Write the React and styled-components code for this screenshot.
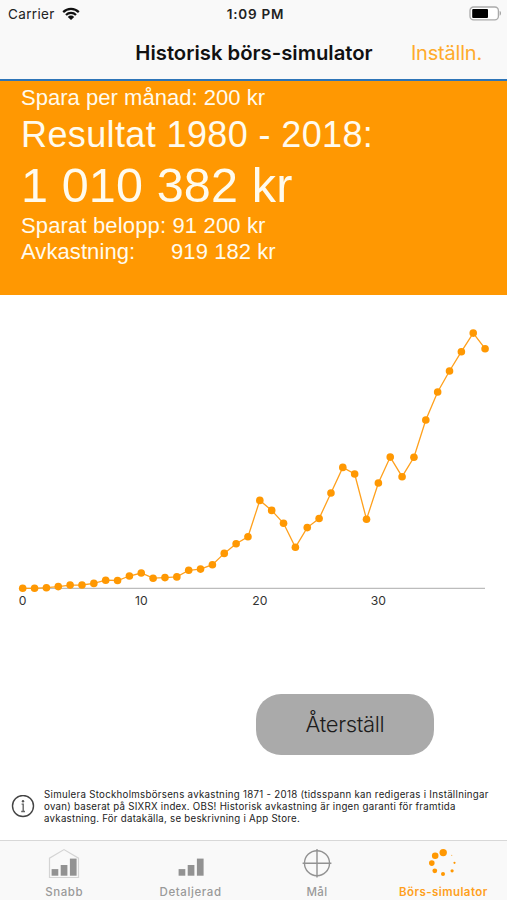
import styled, { createGlobalStyle } from "styled-components";

const ORANGE = "#ff9802";

// height of each yearly point above the axis
const series = [
  0, 0, 0.6, 1.7, 3.2, 3.3, 4.9, 8.1, 7.8, 12.3, 15.3, 10.1, 10.7, 11.4, 18, 19.2, 23.6, 34.9, 44.6, 51.6, 87.9, 77.9,
  65, 41, 60.7, 69.8, 95.3, 120.9, 114.3, 69, 105.3, 131.2, 111.6, 131, 168.3, 196.3, 217.3, 236.6, 255.2, 239.6,
];

const AXIS_Y = 293.3;
const START_X = 22.7;
const STEP = 11.856;

const points = series.map((value, year) => ({ x: START_X + year * STEP, y: AXIS_Y - value }));

const Wifi = () => (
  <svg width='18' height='14' viewBox='0 0 18 14'>
    <g fill='none' stroke='#111' strokeWidth='2.2'>
      <path d='M1.2 5.1a11 11 0 0 1 15.6 0' />
      <path d='M4 8a7 7 0 0 1 10 0' />
    </g>
    <path d='M9 13 5.8 9.9a4.5 4.5 0 0 1 6.4 0z' fill='#111' />
  </svg>
);

const Battery = () => (
  <svg width='34' height='16' viewBox='0 0 34 16'>
    <rect x='2' y='1' width='28.4' height='12.8' rx='3.6' fill='#fff' stroke='#aaa' strokeWidth='1.3' />
    <rect x='4.2' y='2.9' width='15.8' height='9' rx='1' fill='#000' />
    <path d='M31.7 5.1c1.6.5 1.6 4.1 0 4.6z' fill='#999' />
  </svg>
);

const Bars = ({ house }) => (
  <svg width='32' height='32' viewBox='0 0 32 32'>
    {house && <path d='M1.5 29.5V10.2L16 1.6l14.5 8.6v19.3z' fill='none' stroke='#d4d4d4' strokeWidth='1.2' />}
    <g fill='#929292'>
      <rect x='3.6' y='21.1' width='6.7' height='6.6' />
      <rect x='12.7' y='17' width='6.7' height='10.7' />
      <rect x='21.9' y='10.6' width='6.7' height='17.1' />
    </g>
  </svg>
);

const Target = () => (
  <svg width='32' height='32' viewBox='0 0 32 32'>
    <g fill='none' stroke='#929292' strokeWidth='1.4'>
      <circle cx='16' cy='15.2' r='12.5' />
      <path d='M16 1v28.4M1.6 15.2h28.8' />
    </g>
  </svg>
);

const Spinner = () => (
  <svg width='32' height='32' viewBox='0 0 32 32'>
    <g fill={ORANGE}>
      <circle cx='16.2' cy='4.6' r='3.7' />
      <circle cx='8.2' cy='7.8' r='3.3' />
      <circle cx='4.8' cy='15.1' r='2.8' />
      <circle cx='7.8' cy='22.8' r='2.4' />
      <circle cx='16' cy='26' r='2' />
      <circle cx='25.1' cy='22.8' r='1.6' />
      <circle cx='27.5' cy='14.8' r='1.1' />
      <circle cx='24.7' cy='7.4' r='0.6' opacity='0.6' />
    </g>
  </svg>
);

const Info = () => (
  <svg width='24' height='24' viewBox='0 0 24 24'>
    <circle cx='12' cy='11' r='10.5' fill='none' stroke='#444' strokeWidth='1.4' />
    <circle cx='12' cy='6.2' r='1.2' fill='#555' />
    <path d='M10.6 9.1h1.6v7.4M10.2 16.5h3.8' fill='none' stroke='#666' strokeWidth='1.4' />
  </svg>
);

const Chart = () => (
  <ChartSvg viewBox='0 0 507 325'>
    <line x1={START_X} x2='485' y1={AXIS_Y} y2={AXIS_Y} stroke='#bcbcbc' strokeWidth='1.2' />
    <polyline
      points={points.map((p) => `${p.x},${p.y}`).join(" ")}
      fill='none'
      stroke='#ffa01c'
      strokeWidth='1.3'
    />
    {points.map((p, year) => (
      <circle key={year} cx={p.x} cy={p.y} r='3.8' fill={ORANGE} />
    ))}
    {[0, 10, 20, 30].map((year) => (
      <AxisLabel key={year} x={START_X + year * STEP} y='310'>
        {year}
      </AxisLabel>
    ))}
  </ChartSvg>
);

const tabs = [
  { name: "Snabb", icon: <Bars house />, spacing: 0.55 },
  { name: "Detaljerad", icon: <Bars />, spacing: 0.6 },
  { name: "Mål", icon: <Target />, spacing: 0.3 },
  { name: "Börs-simulator", icon: <Spinner />, spacing: 0.43, active: true },
];

const App = () => {
  return (
    <>
      <GlobalStyle />
      <Screen>
        <StatusBar>
          <Carrier>
            <span>Carrier</span>
            <Wifi />
          </Carrier>
          <Clock>1:09 PM</Clock>
          <BatterySlot>
            <Battery />
          </BatterySlot>
        </StatusBar>

        <NavBar>
          <NavTitle>Historisk börs-simulator</NavTitle>
          <NavAction>Inställn.</NavAction>
        </NavBar>

        <Summary>
          <Line $size={22} $height={31} $spacing={0.03}>Spara per månad: 200 kr</Line>
          <Line $size={36} $height={44} $spacing={0.38}>Resultat 1980 - 2018:</Line>
          <Line $size={48.5} $height={56} $spacing={0.15}>1 010 382 kr</Line>
          <Line $size={22} $height={26} $spacing={0.15}>Sparat belopp: 91 200 kr</Line>
          <Line $size={22} $height={26} $spacing={0.08}>
            <Label>Avkastning:</Label>
            <span>919 182 kr</span>
          </Line>
        </Summary>

        <Chart />

        <Actions>
          <ResetButton>Återställ</ResetButton>
        </Actions>

        <Note>
          <Info />
          <NoteText>
            <NoteLine $spacing={0.29}>Simulera Stockholmsbörsens avkastning 1871 - 2018 (tidsspann kan redigeras i Inställningar</NoteLine>
            <NoteLine $spacing={0.26}>ovan) baserat på SIXRX index. OBS! Historisk avkastning är ingen garanti för framtida</NoteLine>
            <NoteLine $spacing={0.26}>avkastning. För datakälla, se beskrivning i App Store.</NoteLine>
          </NoteText>
        </Note>

        <TabBar>
          {tabs.map((tab) => (
            <Tab key={tab.name} $active={tab.active} $spacing={tab.spacing}>
              {tab.icon}
              <span>{tab.name}</span>
            </Tab>
          ))}
        </TabBar>
      </Screen>
    </>
  );
};

export default App;

const GlobalStyle = createGlobalStyle`
  * {
    box-sizing: border-box;
  }

  body {
    margin: 0;
    background: #fff;
    font-family: Inter, Roboto, sans-serif;
  }

  svg {
    display: block;
    flex-shrink: 0;
  }
`;

const Screen = styled.div`
  display: flex;
  flex-direction: column;
  width: 507px;
  height: 900px;
  overflow: hidden;
`;

const StatusBar = styled.div`
  display: grid;
  grid-template-columns: 1fr auto 1fr;
  align-items: center;
  height: 27px;
  padding: 0 5px 0 8px;
  background: #f9f9f9;
  font-size: 13.5px;
  color: #222;
`;

const Carrier = styled.div`
  display: flex;
  align-items: center;
  gap: 7px;
  letter-spacing: 0.35px;
`;

const Clock = styled.div`
  padding-left: 1px;
  font-weight: 600;
  letter-spacing: 0.75px;
`;

const BatterySlot = styled.div`
  display: flex;
  justify-content: flex-end;
`;

const NavBar = styled.div`
  display: grid;
  grid-template-columns: 1fr auto 1fr;
  align-items: center;
  height: 54px;
  padding: 0 25px 1px 26px;
  background: #f9f9f9;
  border-bottom: 2px solid #2e75b8;
`;

const NavTitle = styled.h1`
  grid-column: 2;
  margin: 0;
  font-size: 20.3px;
  font-weight: 600;
  letter-spacing: 0;
  color: #111;
`;

const NavAction = styled.span`
  justify-self: end;
  font-size: 20px;
  letter-spacing: -0.2px;
  color: #ffab2b;
`;

const Summary = styled.section`
  height: 214px;
  padding: 1px 20px 0 21px;
  background: ${ORANGE};
  color: #fffbee;
  font-family: "Liberation Sans", Arial, sans-serif;
`;

const Line = styled.div`
  display: flex;
  height: ${({ $height }) => $height}px;
  font-size: ${({ $size }) => $size}px;
  line-height: ${({ $height }) => $height}px;
  letter-spacing: ${({ $spacing }) => $spacing}px;
  white-space: pre;
`;

const Label = styled.span`
  width: 150px;
`;

const ChartSvg = styled.svg`
  width: 507px;
  height: 325px;
`;

const AxisLabel = styled.text`
  font-size: 12.2px;
  text-anchor: middle;
  fill: #333;
`;

const Actions = styled.div`
  display: flex;
  justify-content: flex-end;
  padding: 74px 73px 0 0;
`;

const ResetButton = styled.button`
  width: 178px;
  height: 61px;
  padding: 0 0 2px;
  border: none;
  border-radius: 25px;
  background: #aaa;
  color: #1c1c1c;
  font-family: inherit;
  font-size: 22px;
  font-weight: 300;
  letter-spacing: -0.35px;
`;

const Note = styled.div`
  display: flex;
  align-items: center;
  gap: 9px;
  margin-top: 34px;
  padding-left: 11px;
`;

const NoteText = styled.div`
  display: flex;
  flex-direction: column;
`;

const NoteLine = styled.span`
  font-size: 9.7px;
  line-height: 11.8px;
  letter-spacing: ${({ $spacing }) => $spacing}px;
  white-space: nowrap;
  color: #222;
`;

const TabBar = styled.nav`
  display: grid;
  grid-template-columns: repeat(4, 126.4px);
  height: 60px;
  margin-top: auto;
  padding-left: 1px;
  border-top: 1px solid #d8d8d8;
  background: #f9f9f9;
`;

const Tab = styled.div`
  display: flex;
  flex-direction: column;
  align-items: center;
  gap: 5px;
  padding-top: 7px;
  font-size: 11.5px;
  font-weight: ${({ $active }) => ($active ? 600 : 500)};
  letter-spacing: ${({ $spacing }) => $spacing}px;
  color: ${({ $active }) => ($active ? "#ffa01c" : "#999")};
`;
